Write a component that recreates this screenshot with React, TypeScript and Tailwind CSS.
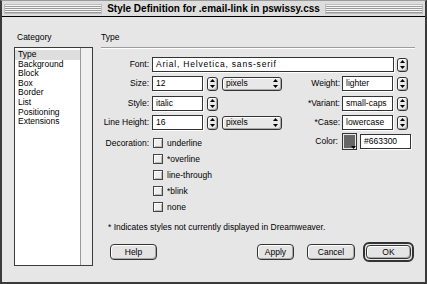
import React from "react";

const Arrows = () => (
  <svg width="5" height="9" viewBox="0 0 5 9" className="block">
    <path d="M2.5 0 L5 3 L0 3 Z" fill="#000" />
    <path d="M0 6 L5 6 L2.5 9 Z" fill="#000" />
  </svg>
);

const Stepper = () => (
  <div className="w-[11px] h-[14px] rounded-[3px] border border-[#333] bg-[#e8e8e8] shadow-[inset_1px_1px_0_#fff,inset_-1px_-1px_0_#aaa] flex items-center justify-center">
    <Arrows />
  </div>
);

const Field = ({ w, v, extra = "" }: { w: string; v: string; extra?: string }) => (
  <div className={`${w} ${extra} h-[15px] bg-white border border-[#333] shadow-[1px_1px_0_#fff] flex items-center pl-[3px] leading-none whitespace-nowrap overflow-hidden`}>
    {v}
  </div>
);

const Popup = () => (
  <div className="w-[60px] h-[14px] rounded-[3px] border border-[#333] bg-[#e8e8e8] shadow-[inset_1px_1px_0_#fff,inset_-1px_-1px_0_#aaa] flex items-center justify-between pl-[3px] pr-[3px] leading-none">
    <span>pixels</span>
    <Arrows />
  </div>
);

const Label = ({ w, t }: { w: string; t: string }) => (
  <div className={`${w} text-right whitespace-nowrap leading-none`}>{t}</div>
);

const Check = ({ t }: { t: string }) => (
  <div className="h-[16px] flex items-center">
    <div className="w-[10px] h-[10px] border border-[#444] bg-[#eeeeee] shadow-[inset_1px_1px_0_#fff,inset_-1px_-1px_0_#bbb]" />
    <span className="ml-[4px] leading-none">{t}</span>
  </div>
);

const Btn = ({ w, t }: { w: string; t: string }) => (
  <div className={`${w} h-[16px] rounded-[4px] border border-[#333] bg-[#e4e4e4] shadow-[inset_1px_1px_0_#fff,inset_-1px_-1px_0_#a8a8a8] flex items-center justify-center leading-none`}>
    {t}
  </div>
);

const stripes =
  "flex-1 h-[10px] bg-[repeating-linear-gradient(to_bottom,#f6f6f6_0px,#f6f6f6_1px,#9a9a9a_1px,#9a9a9a_2px)] border border-[#bdbdbd]";

export default function App() {
  const items = ["Type", "Background", "Block", "Box", "Border", "List", "Positioning", "Extensions"];
  return (
    <div className="w-[427px] h-[284px] bg-[#e6e6e6] flex flex-col border-t border-t-[#9a9a9a] border-x-[2px] border-b-[2px] border-[#3a3a3a] overflow-hidden font-['Liberation_Sans',Arial,sans-serif] text-[8.5px] text-black">
      {/* title bar */}
      <div className="h-[16px] shrink-0 bg-[#dddddd] border-b border-black flex items-center px-[2px]">
        <div className={stripes} />
        <div className="px-[5px] font-bold text-[10px] leading-none whitespace-nowrap">
          Style Definition for .email-link in pswissy.css
        </div>
        <div className={stripes} />
      </div>

      <div className="flex-1 flex">
        {/* category column */}
        <div className="ml-[12px] w-[79px] flex flex-col">
          <div className="pt-[15px] pl-[3px] h-[26px] leading-[11px]">Category</div>
          <div className="mt-[4px] h-[219px] bg-white border border-[#3a3a3a] flex">
            <div className="flex-1 pt-[2px]">
              {items.map((it, i) => (
                <div
                  key={it}
                  className={`h-[9.6px] leading-[9.6px] pl-[3px] ${i === 0 ? "bg-[#dedede]" : ""}`}
                >
                  {it}
                </div>
              ))}
            </div>
            <div className="w-[12px] border-l border-[#9a9a9a] bg-[#efefef]" />
          </div>
        </div>

        {/* right panel */}
        <div className="ml-[8px] mr-[10px] flex-1 flex flex-col">
          <div className="pt-[15px] h-[26px] leading-[11px]">Type</div>
          <div className="mt-[4px] h-[2px] border-t border-[#9c9c9c] border-b border-b-white" />

          {/* Font */}
          <div className="mt-[8px] h-[15px] flex items-center">
            <Label w="w-[48px]" t="Font:" />
            <div className="ml-[3px]"><Field w="w-[242px]" extra="tracking-[0.8px]" v="Arial, Helvetica, sans-serif" /></div>
            <div className="ml-[3px]"><Stepper /></div>
          </div>

          {/* Size */}
          <div className="mt-[4px] h-[15px] flex items-center">
            <Label w="w-[48px]" t="Size:" />
            <div className="ml-[3px]"><Field w="w-[51px]" v="12" /></div>
            <div className="ml-[4px]"><Stepper /></div>
            <div className="ml-[4px]"><Popup /></div>
            <Label w="w-[58px]" t="Weight:" />
            <div className="ml-[2px]"><Field w="w-[51px]" v="lighter" /></div>
            <div className="ml-[4px]"><Stepper /></div>
          </div>

          {/* Style */}
          <div className="mt-[5px] h-[15px] flex items-center">
            <Label w="w-[48px]" t="Style:" />
            <div className="ml-[3px]"><Field w="w-[51px]" v="italic" /></div>
            <div className="ml-[4px]"><Stepper /></div>
            <div className="ml-[4px] w-[60px]" />
            <Label w="w-[58px]" t="*Variant:" />
            <div className="ml-[2px]"><Field w="w-[51px]" v="small-caps" /></div>
            <div className="ml-[4px]"><Stepper /></div>
          </div>

          {/* Line Height */}
          <div className="mt-[4px] h-[15px] flex items-center">
            <Label w="w-[48px]" t="Line Height:" />
            <div className="ml-[3px]"><Field w="w-[51px]" v="16" /></div>
            <div className="ml-[4px]"><Stepper /></div>
            <div className="ml-[4px]"><Popup /></div>
            <Label w="w-[58px]" t="*Case:" />
            <div className="ml-[2px]"><Field w="w-[51px]" v="lowercase" /></div>
            <div className="ml-[4px]"><Stepper /></div>
          </div>

          {/* Decoration + Color */}
          <div className="mt-[3px] flex">
            <div className="w-[181px] pt-[2px] flex">
              <div className="w-[48px] h-[16px] flex items-center justify-end leading-none">Decoration:</div>
              <div className="ml-[4px] flex flex-col">
                <Check t="underline" />
                <Check t="*overline" />
                <Check t="line-through" />
                <Check t="*blink" />
                <Check t="none" />
              </div>
            </div>
            <div className="h-[17px] flex items-center">
              <Label w="w-[56px]" t="Color:" />
              <div className="ml-[4px] w-[15px] h-[17px] border border-[#333] bg-[#e8e8e8] p-[1px] relative">
                <div className="w-full h-full bg-[#666666]" />
                <svg width="5" height="3" viewBox="0 0 5 3" className="absolute right-[0px] bottom-[0px]">
                  <path d="M0 0 L5 0 L2.5 3 Z" fill="#000" />
                </svg>
              </div>
              <div className="ml-[3px]"><Field w="w-[51px]" v="#663300" /></div>
            </div>
          </div>

          {/* note */}
          <div className="mt-[7px] ml-[7px] h-[11px] leading-[11px] whitespace-nowrap">
            * Indicates styles not currently displayed in Dreamweaver.
          </div>

          {/* buttons */}
          <div className="mt-[9px] h-[20px] flex items-center">
            <div className="ml-[9px]"><Btn w="w-[47px]" t="Help" /></div>
            <div className="ml-auto"><Btn w="w-[37px]" t="Apply" /></div>
            <div className="ml-[13px]"><Btn w="w-[48px]" t="Cancel" /></div>
            <div className="ml-[8px] mr-[1px] w-[51px] h-[20px] rounded-[6px] border-[2px] border-[#333] p-[1px] flex">
              <div className="flex-1 rounded-[4px] border border-[#333] bg-[#e4e4e4] shadow-[inset_1px_1px_0_#fff,inset_-1px_-1px_0_#a8a8a8] flex items-center justify-center leading-none">
                OK
              </div>
            </div>
          </div>
        </div>
      </div>
    </div>
  );
}
